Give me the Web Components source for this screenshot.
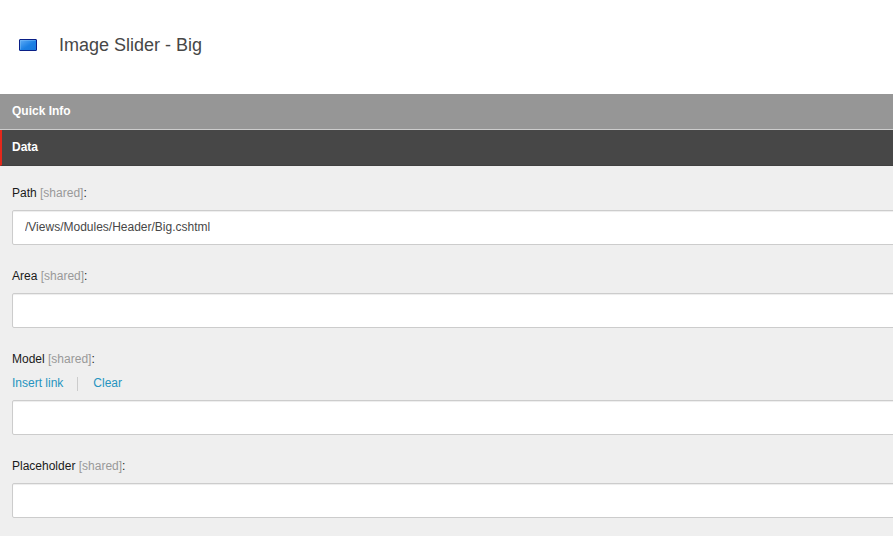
<!DOCTYPE html>
<html lang="en">
<head>
<meta charset="utf-8">
<title>Image Slider - Big</title>
<style>
  body { margin: 0; background: #efefef; color: #1a1a1a; font: 12px/16px "Liberation Sans", Arial, sans-serif; overflow: hidden; }
</style>
</head>
<body>
<item-editor></item-editor>
<script>
const define = (name, html, setup) => {
  const template = document.createElement('template');
  template.innerHTML = html;
  customElements.define(name, class extends HTMLElement {
    constructor() {
      super();
      this.attachShadow({ mode: 'open' }).append(template.content.cloneNode(true));
    }
    connectedCallback() { if (setup) setup(this, this.shadowRoot); }
  });
};

define('item-header', `
  <style>
    :host { display: flex; align-items: center; gap: 21px; padding: 34px 19px 38px; background: #fff; }
    svg { flex: none; display: block; }
    h1 { margin: 0; font-size: 18px; line-height: 22px; font-weight: normal; color: #474747; }
  </style>
  <svg width="19" height="12" viewBox="0 0 19 12" aria-hidden="true">
    <defs><linearGradient id="g" x1="0" y1="0" x2="1" y2="1">
      <stop offset="0" stop-color="#64b0f8"/><stop offset=".55" stop-color="#1c80e4"/><stop offset="1" stop-color="#1878dc"/>
    </linearGradient></defs>
    <rect x=".5" y=".5" width="17" height="11" rx=".5" fill="url(#g)" stroke="#0a1f86"/>
    <path d="M1.5 10.5V1.5H16.5" fill="none" stroke="#8cc8fb" stroke-opacity=".4"/>
  </svg>
  <h1><slot></slot></h1>`);

define('section-bar', `
  <style>
    :host { display: block; }
    h2 { margin: 0; font: inherit; }
    button { display: block; width: 100%; height: 36px; margin: 0; padding: 0 12px 2px; border: 0; border-bottom: 1px solid #ccc;
      background: #969696; color: #fff; font: inherit; font-weight: bold; line-height: 16px; text-align: left; }
    :host([open]) button { border-bottom-color: #404040; border-left: 2px solid #e5281b; padding-left: 10px; background: #474747; }
  </style>
  <h2><button type="button"><slot></slot></button></h2>`,
  (host, root) => root.querySelector('button').setAttribute('aria-expanded', host.hasAttribute('open')));

define('field-actions', `
  <style>
    :host { display: flex; align-items: center; margin-bottom: 9px; }
    a { color: #2694c0; text-decoration: none; }
    a + a { margin-left: 14px; }
    a + a::before { content: ""; display: inline-block; height: 14px; margin-right: 15px; border-left: 1px solid #ccc; vertical-align: middle; }
  </style>
  <a href="#insert">Insert link</a><a href="#clear">Clear</a>`);

define('text-field', `
  <style>
    :host { display: block; }
    label { display: block; margin-bottom: 9px; }
    :host([actions]) label { margin-bottom: 8px; }
    .scope { color: #999; }
    input { display: block; box-sizing: border-box; width: 100%; height: 35px; margin: 0; padding: 0 12px 2px; border: 1px solid #ccc;
      border-radius: 2px; background: #fff; box-shadow: inset 0 1px 1px rgba(0,0,0,.075); color: #474747; font: inherit; outline: 0; }
  </style>
  <label for="value"><span class="name"></span> <span class="scope">[shared]</span>:</label>
  <slot></slot>
  <input id="value" type="text">`,
  (host, root) => {
    root.querySelector('.name').textContent = host.getAttribute('label');
    root.querySelector('input').value = host.getAttribute('value') || '';
  });

define('field-list', `
  <style>
    :host { display: flex; flex-direction: column; gap: 23px; margin-right: -12px; padding: 19px 0 18px 12px; }
  </style>
  <slot></slot>`);

define('item-editor', `
  <style>:host { display: block; overflow: hidden; }</style>
  <item-header>Image Slider - Big</item-header>
  <section-bar>Quick Info</section-bar>
  <section-bar open>Data</section-bar>
  <field-list>
    <text-field label="Path" value="/Views/Modules/Header/Big.cshtml"></text-field>
    <text-field label="Area"></text-field>
    <text-field label="Model" actions><field-actions></field-actions></text-field>
    <text-field label="Placeholder"></text-field>
  </field-list>`);
</script>
</body>
</html>
